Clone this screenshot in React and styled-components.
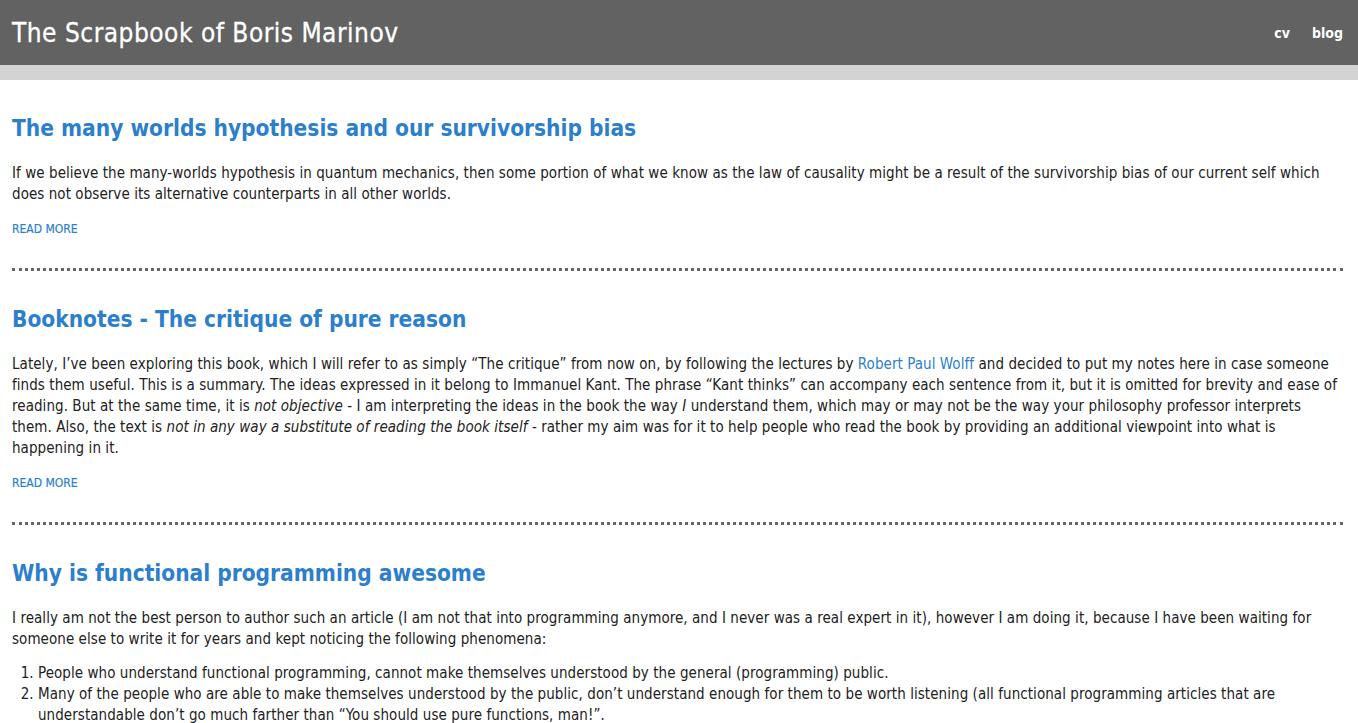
import React from "react";
import styled, { createGlobalStyle } from "styled-components";

const Global = createGlobalStyle`
  html, body {
    margin: 0;
    padding: 0;
    background: #fff;
    font-family: "DejaVu Sans Condensed", "DejaVu Sans", sans-serif;
    color: #222;
  }
`;

const posts = [
  {
    title: "The many worlds hypothesis and our survivorship bias",
    body: (
      <p>
        If we believe the many-worlds hypothesis in quantum mechanics, then some portion of what we know as
        the law of causality might be a result of the survivorship bias of our current self which does not
        observe its alternative counterparts in all other worlds.
      </p>
    ),
    more: true,
  },
  {
    title: "Booknotes - The critique of pure reason",
    body: (
      <p>
        Lately, I’ve been exploring this book, which I will refer to as simply “The critique” from now on, by
        following the lectures by <InlineLink href="#">Robert Paul Wolff</InlineLink> and decided to put my notes
        here in case someone finds them useful. This is a summary. The ideas expressed in it belong to Immanuel
        Kant. The phrase “Kant thinks” can accompany each sentence from it, but it is omitted for brevity and
        ease of reading. But at the same time, it is <em>not objective</em> - I am interpreting the ideas in the
        book the way <em>I</em> understand them, which may or may not be the way your philosophy professor
        interprets them. Also, the text is <em>not in any way a substitute of reading the book itself</em> -
        rather my aim was for it to help people who read the book by providing an additional viewpoint into what
        is happening in it.
      </p>
    ),
    more: true,
  },
  {
    title: "Why is functional programming awesome",
    body: (
      <>
        <p>
          I really am not the best person to author such an article (I am not that into programming anymore, and
          I never was a real expert in it), however I am doing it, because I have been waiting for someone else
          to write it for years and kept noticing the following phenomena:
        </p>
        <ol>
          <li>
            People who understand functional programming, cannot make themselves understood by the general
            (programming) public.
          </li>
          <li>
            Many of the people who are able to make themselves understood by the public, don’t understand enough
            for them to be worth listening (all functional programming articles that are understandable don’t go
            much farther than “You should use pure functions, man!”.
          </li>
        </ol>
      </>
    ),
    more: false,
  },
];

function InlineLink(props) {
  return <BlueLink {...props} />;
}

const App = () => (
  <>
    <Global />
    <Header>
      <SiteTitle>The Scrapbook of Boris Marinov</SiteTitle>
      <Nav>
        <NavLink href="#">cv</NavLink>
        <NavLink href="#">blog</NavLink>
      </Nav>
    </Header>
    <SubBar />
    <Main>
      {posts.map((post, i) => (
        <Post key={i} $last={i === posts.length - 1}>
          <PostTitle>{post.title}</PostTitle>
          <PostBody>{post.body}</PostBody>
          {post.more && <ReadMore href="#">READ MORE</ReadMore>}
        </Post>
      ))}
    </Main>
  </>
);

export default App;

const Header = styled.header`
  display: flex;
  justify-content: space-between;
  align-items: center;
  height: 65px;
  padding: 0 15px 0 12px;
  background-color: #626262;
`;

const SiteTitle = styled.h1`
  margin: 0;
  color: #fff;
  font-size: 26px;
  font-weight: normal;
  letter-spacing: 0.5px;
  -webkit-text-stroke: 0.3px #fff;
`;

const Nav = styled.nav`
  display: flex;
  gap: 22px;
`;

const NavLink = styled.a`
  color: #fff;
  text-decoration: none;
  font-size: 14px;
  font-weight: bold;
`;

const SubBar = styled.div`
  height: 15px;
  background-color: #d3d3d3;
`;

const Main = styled.main`
  padding: 0 15px 0 12px;
`;

const Post = styled.article`
  padding: 30px 0 31px;
  border-bottom: ${(p) => (p.$last ? "none" : "3px dotted #666")};
`;

const PostTitle = styled.h2`
  margin: 0 0 17px;
  color: #2b7fcc;
  font-size: 22.5px;
  font-weight: bold;
  line-height: 36px;
`;

const PostBody = styled.div`
  font-size: 15px;
  line-height: 21px;
  letter-spacing: 0.06px;

  p {
    margin: 0 0 13px;
  }

  ol {
    margin: 0;
    padding-left: 26px;
  }
`;

const BlueLink = styled.a`
  color: #2b7fcc;
  text-decoration: none;
`;

const ReadMore = styled.a`
  display: inline-block;
  margin-top: 3px;
  color: #2b7fcc;
  text-decoration: none;
  font-size: 12px;
  -webkit-text-stroke: 0.2px #2b7fcc;
`;
